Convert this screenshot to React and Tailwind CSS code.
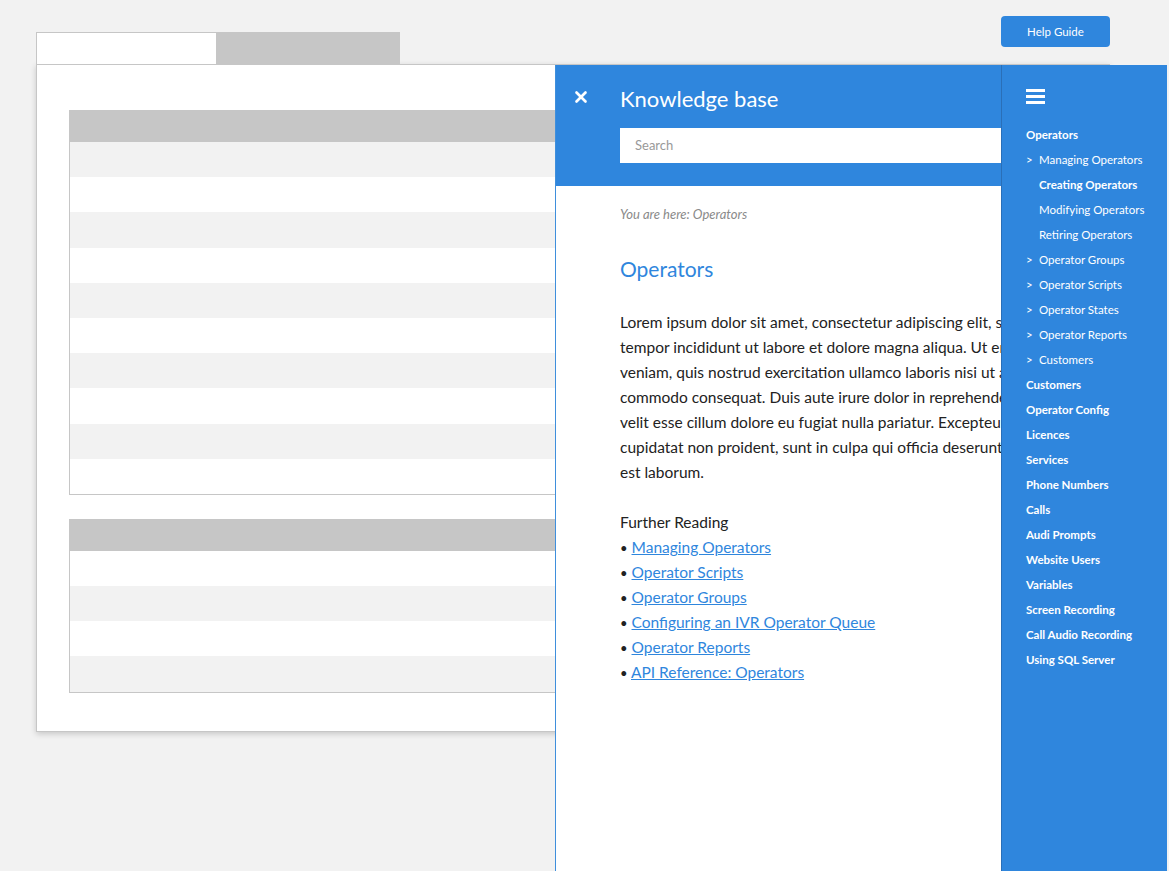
import { X } from 'lucide-react';

const font = { fontFamily: 'Lato, "Noto Sans", sans-serif' };

const navItems = [
  { label: 'Operators', level: 0, bold: true },
  { label: 'Managing Operators', level: 1 },
  { label: 'Creating Operators', level: 2, bold: true },
  { label: 'Modifying Operators', level: 2 },
  { label: 'Retiring Operators', level: 2 },
  { label: 'Operator Groups', level: 1 },
  { label: 'Operator Scripts', level: 1 },
  { label: 'Operator States', level: 1 },
  { label: 'Operator Reports', level: 1 },
  { label: 'Customers', level: 1 },
  { label: 'Customers', level: 0, bold: true },
  { label: 'Operator Config', level: 0, bold: true },
  { label: 'Licences', level: 0, bold: true },
  { label: 'Services', level: 0, bold: true },
  { label: 'Phone Numbers', level: 0, bold: true },
  { label: 'Calls', level: 0, bold: true },
  { label: 'Audi Prompts', level: 0, bold: true },
  { label: 'Website Users', level: 0, bold: true },
  { label: 'Variables', level: 0, bold: true },
  { label: 'Screen Recording', level: 0, bold: true },
  { label: 'Call Audio Recording', level: 0, bold: true },
  { label: 'Using SQL Server', level: 0, bold: true },
];

const lorem = [
  'Lorem ipsum dolor sit amet, consectetur adipiscing elit, sed do eiusmod',
  'tempor incididunt ut labore et dolore magna aliqua. Ut enim ad minim',
  'veniam, quis nostrud exercitation ullamco laboris nisi ut aliquip ex ea',
  'commodo consequat. Duis aute irure dolor in reprehenderit in voluptate',
  'velit esse cillum dolore eu fugiat nulla pariatur. Excepteur sint occaecat',
  'cupidatat non proident, sunt in culpa qui officia deserunt mollit anim id',
  'est laborum.',
];

const reading = [
  'Managing Operators',
  'Operator Scripts',
  'Operator Groups',
  'Configuring an IVR Operator Queue',
  'Operator Reports',
  'API Reference: Operators',
];

function StripedTable({ rows }) {
  return (
    <div className="border border-[#c6c6c6] border-t-0">
      <div className="h-[32px] bg-[#c6c6c6]" />
      {rows.map((gray, i) => (
        <div key={i} className={`h-[35.2px] ${gray ? 'bg-[#f2f2f2]' : 'bg-white'}`} />
      ))}
    </div>
  );
}

export default function App() {
  return (
    <div className="relative h-[871px] overflow-hidden bg-[#f2f2f2]" style={font}>
      <div className="pl-[36px] pt-[16px]">
        <div className="flex w-[1074px] items-end justify-between h-[48px]">
          <div className="flex">
            <div className="w-[181px] h-[32px] bg-white border border-b-0 border-[#c6c6c6]" />
            <div className="w-[183px] h-[32px] bg-[#c6c6c6]" />
          </div>
          <button className="self-start w-[109px] h-[31px] rounded-[4px] bg-[#2f86dd] text-white text-[11.5px]">
            Help Guide
          </button>
        </div>
        <div className="w-[1074px] h-[668px] bg-white border border-[#c6c6c6] shadow-[0_2px_6px_rgba(0,0,0,0.18)] pl-[32px] pr-[32px] pt-[45px] flex flex-col gap-[24px]">
          <StripedTable rows={[true, false, true, false, true, false, true, false, true, false]} />
          <StripedTable rows={[false, true, false, true]} />
        </div>
      </div>

      {/* knowledge base drawer, its right part sits under the nav */}
      <div className="absolute left-[555px] top-[65px] right-[168px] bottom-0 overflow-hidden bg-white border-l border-l-[#3f8fdc]">
        <div className="h-[121px] bg-[#2f86dd] pl-[16px] pt-[22px] flex">
          <X className="w-[18px] h-[18px] text-white mt-[1px] shrink-0" strokeWidth={3.5} />
          <div className="ml-[30px] flex-1">
            <div className="text-white text-[22px] leading-[26px] mt-[-1px]">Knowledge base</div>
            <div className="mt-[16px] h-[35px] bg-white flex items-center pl-[15px] text-[13px] text-[#999]">
              Search
            </div>
          </div>
        </div>
        <div className="pl-[64px] pt-[19px] text-[#222]">
          <div className="italic text-[13px] text-[#8a8a8a] leading-[18px]">You are here: Operators</div>
          <div className="mt-[32px] text-[21px] text-[#2f86dd] leading-[28px]">Operators</div>
          <div className="mt-[27px] text-[15.5px] leading-[25px]">
            {lorem.map((l, i) => (
              <div key={i} className="whitespace-nowrap">{l}</div>
            ))}
          </div>
          <div className="mt-[25px] text-[15.5px] leading-[25px]">
            <div>Further Reading</div>
            {reading.map((r) => (
              <div key={r} className="h-[25px] whitespace-nowrap">
                <span className="text-[13px] leading-none">•</span> <span className="text-[#2f86dd] underline">{r}</span>
              </div>
            ))}
          </div>
        </div>
      </div>

      {/* right nav */}
      <div className="absolute left-[1001px] top-[65px] w-[166px] bottom-0 bg-[#2f86dd] border-l border-[#2a6fb8] pl-[24px] pt-[24px] text-white">
        <div className="flex flex-col gap-[3px] w-[19px]">
          <div className="h-[3px] bg-white" />
          <div className="h-[3px] bg-white" />
          <div className="h-[3px] bg-white" />
        </div>
        <div className="mt-[18px] text-[11.5px]">
          {navItems.map((item, i) => (
            <div key={i} className={`h-[25px] leading-[25px] flex whitespace-nowrap ${item.bold ? 'font-bold' : ''}`}>
              {item.level === 1 && <span className="w-[13px] shrink-0">&gt;</span>}
              {item.level === 2 && <span className="w-[13px] shrink-0" />}
              <span>{item.label}</span>
            </div>
          ))}
        </div>
      </div>
    </div>
  );
}
